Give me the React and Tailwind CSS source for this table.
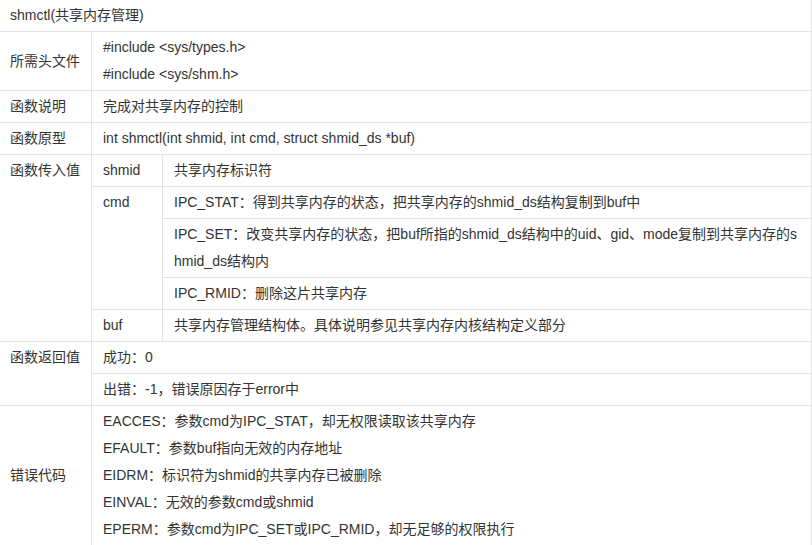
import React from 'react';

const td = 'border border-[#e3e3e3] px-[11px] py-[2px] align-top';

const App = () => {
    return (
        <div className="w-[812px] h-[545px] overflow-hidden bg-white text-[14px] leading-[27px] text-[#333] font-['Liberation_Sans','Noto_Sans_CJK_SC',sans-serif]">
            <table className="w-[812px] -ml-[1px] -mt-[1px] border-collapse table-fixed">
                <colgroup>
                    <col className="w-[92px]" />
                    <col className="w-[71px]" />
                    <col className="w-[649px]" />
                </colgroup>
                <tbody>
                    <tr>
                        <td colSpan={3} className={td + ' pl-[10px]'}>shmctl(共享内存管理)</td>
                    </tr>
                    <tr>
                        <td className={td + ' pl-[10px] !align-middle'}>所需头文件</td>
                        <td colSpan={2} className={td}>
                            <div>#include &lt;sys/types.h&gt;</div>
                            <div>#include &lt;sys/shm.h&gt;</div>
                        </td>
                    </tr>
                    <tr>
                        <td className={td + ' pl-[10px]'}>函数说明</td>
                        <td colSpan={2} className={td}>完成对共享内存的控制</td>
                    </tr>
                    <tr>
                        <td className={td + ' pl-[10px]'}>函数原型</td>
                        <td colSpan={2} className={td}>int shmctl(int shmid, int cmd, struct shmid_ds *buf)</td>
                    </tr>
                    <tr>
                        <td rowSpan={5} className={td + ' pl-[10px]'}>函数传入值</td>
                        <td className={td}>shmid</td>
                        <td className={td}>共享内存标识符</td>
                    </tr>
                    <tr>
                        <td rowSpan={3} className={td}>cmd</td>
                        <td className={td}>IPC_STAT：得到共享内存的状态，把共享内存的shmid_ds结构复制到buf中</td>
                    </tr>
                    <tr>
                        <td className={td + ' whitespace-nowrap'}>
                            <div>IPC_SET：改变共享内存的状态，把buf所指的shmid_ds结构中的uid、gid、mode复制到共享内存的s</div>
                            <div>hmid_ds结构内</div>
                        </td>
                    </tr>
                    <tr>
                        <td className={td}>IPC_RMID：删除这片共享内存</td>
                    </tr>
                    <tr>
                        <td className={td}>buf</td>
                        <td className={td}>共享内存管理结构体。具体说明参见共享内存内核结构定义部分</td>
                    </tr>
                    <tr>
                        <td rowSpan={2} className={td + ' pl-[10px]'}>函数返回值</td>
                        <td colSpan={2} className={td}>成功：0</td>
                    </tr>
                    <tr>
                        <td colSpan={2} className={td}>出错：-1，错误原因存于error中</td>
                    </tr>
                    <tr>
                        <td className={td + ' pl-[10px] !align-middle'}>错误代码</td>
                        <td colSpan={2} className={td}>
                            <div>EACCES：参数cmd为IPC_STAT，却无权限读取该共享内存</div>
                            <div>EFAULT：参数buf指向无效的内存地址</div>
                            <div>EIDRM：标识符为shmid的共享内存已被删除</div>
                            <div>EINVAL：无效的参数cmd或shmid</div>
                            <div>EPERM：参数cmd为IPC_SET或IPC_RMID，却无足够的权限执行</div>
                        </td>
                    </tr>
                </tbody>
            </table>
        </div>
    );
};

export default App;
